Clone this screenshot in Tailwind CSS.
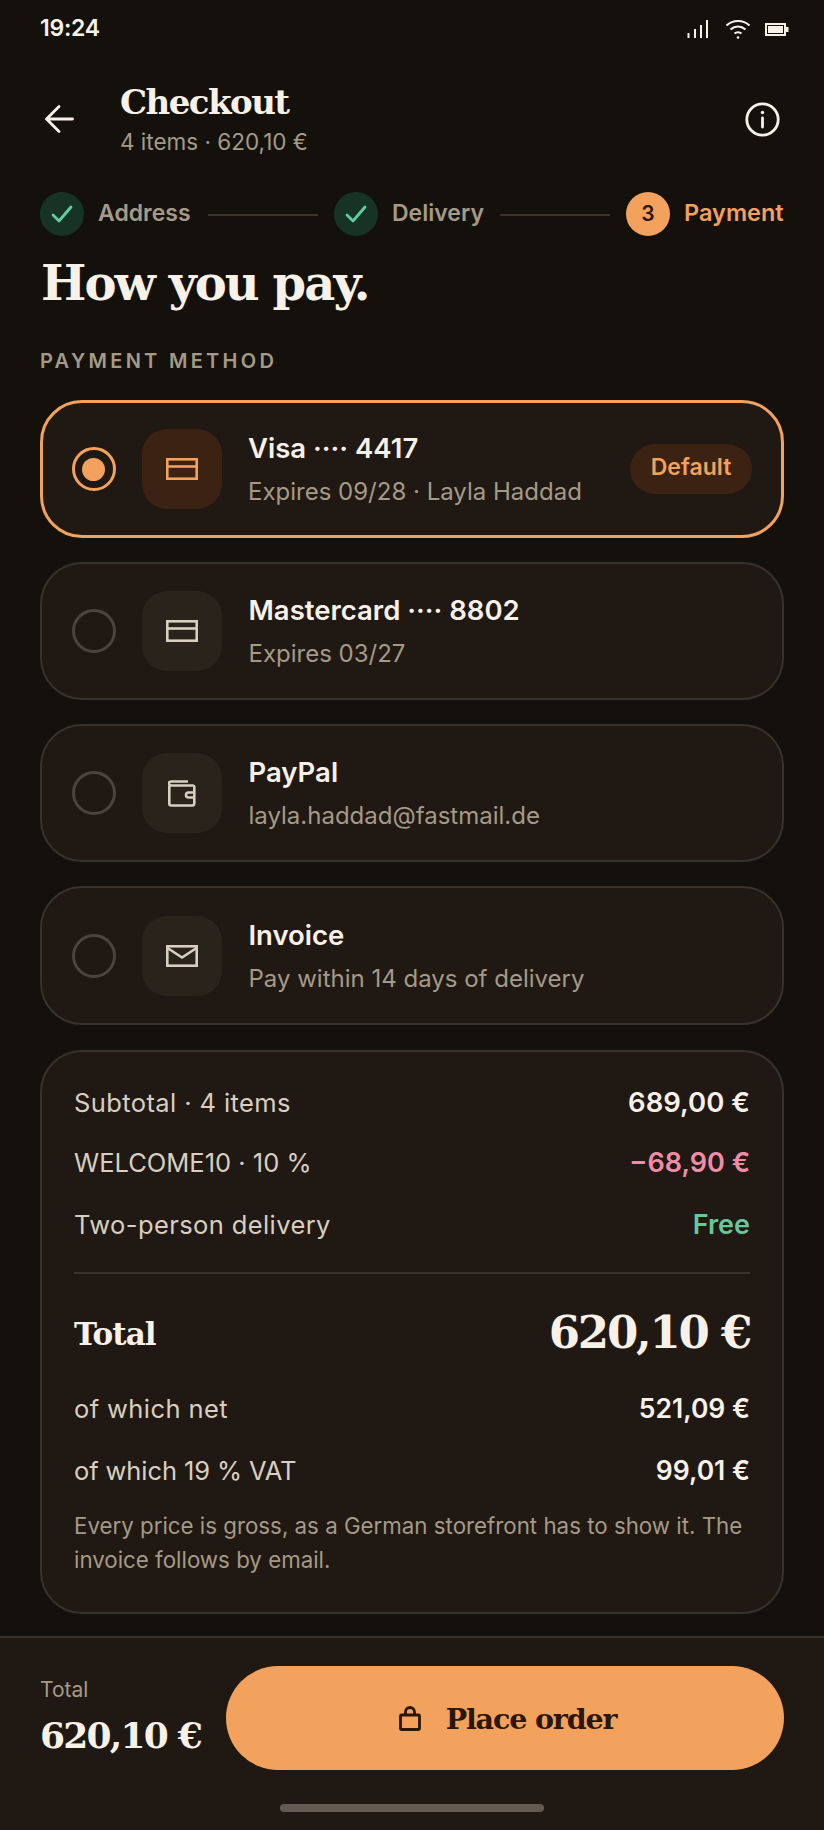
<!DOCTYPE html>
<html lang="en">
<head>
    <meta charset="UTF-8">
    <meta name="viewport" content="width=device-width, initial-scale=1.0">
    <title>Checkout</title>
    <script src="https://cdn.jsdelivr.net/npm/@tailwindcss/browser@4"></script>
</head>
<body class="bg-[#14110d] font-['Inter','Noto_Sans',sans-serif] text-[#f7f1e8]">
<div class="w-[824px] h-[1830px] flex flex-col overflow-hidden">

    <!-- Status bar -->
    <div class="h-[56px] pl-[40px] pr-[35px] flex items-center justify-between shrink-0">
        <span class="text-[23px] font-semibold tracking-[-0.01em]">19:24</span>
        <div class="flex items-center mt-[2px] text-[#f7f1e8]">
            <svg class="mr-[17px]" width="21" height="20" viewBox="0 0 21 20" fill="none" stroke="currentColor" stroke-width="2"><path d="M1.5 14v5M8 10v9M14 6v13M20 1v18"/></svg>
            <svg class="mr-[14px]" width="26" height="20" viewBox="0 0 26 20" fill="none" stroke="currentColor" stroke-width="2.2"><path d="M1.5 6.5C8 .5 18 .5 24.5 6.500M5.500 10.500C10 6.500 16 6.500 20.500 10.500M9.500 14.500c2-1.700 5-1.700 7 0"/><circle cx="13" cy="18.500" r="1.300" fill="currentColor" stroke="none"/></svg>
            <svg width="24" height="13" viewBox="0 0 24 13" fill="none"><rect x="1" y="1" width="19" height="11" stroke="currentColor" stroke-width="2"/><rect x="3" y="3" width="15" height="7" fill="currentColor"/><rect x="21" y="4" width="2.500" height="5" fill="currentColor"/></svg>
        </div>
    </div>

    <!-- Header -->
    <div class="h-[126px] pl-[45px] pr-[44px] flex items-center justify-between shrink-0">
        <div class="flex items-center">
            <svg width="29" height="28" viewBox="0 0 29 28" fill="none" stroke="currentColor" stroke-width="2.800" stroke-linecap="round" stroke-linejoin="round"><path d="M27.500 14H2M14 1.500 1.500 14 14 26.500"/></svg>
            <div class="ml-[46px] mt-[-3px]">
                <div class="font-['DejaVu_Serif',serif] font-bold text-[34px] leading-[44px] tracking-[-0.045em]">Checkout</div>
                <div class="text-[22.500px] leading-[26px] mt-[5px] text-[#a59a86]">4 items · 620,10 €</div>
            </div>
        </div>
        <svg width="35" height="35" viewBox="0 0 35 35" fill="none" stroke="currentColor" stroke-width="2.800" stroke-linecap="round"><circle cx="17.500" cy="17.500" r="15.700"/><path d="M17.500 16v9"/><circle cx="17.500" cy="10.500" r="1.700" fill="currentColor" stroke="none"/></svg>
    </div>

    <!-- Stepper -->
    <div class="h-[44px] mt-[10px] mx-[40px] flex items-center shrink-0 text-[23px] font-semibold">
        <span class="w-[44px] h-[44px] rounded-full bg-[#173325] flex items-center justify-center shrink-0">
            <svg width="22" height="18" viewBox="0 0 22 18" fill="none" stroke="#5fcf9f" stroke-width="2.800" stroke-linecap="round" stroke-linejoin="round"><path d="M2 10l6 6L20 2"/></svg>
        </span>
        <span class="ml-[14px] mb-[2px] text-[#a59a86] w-[96px]">Address</span>
        <span class="h-[2px] w-[110px] ml-[14px] bg-[#3b352d] mt-[2px]"></span>
        <span class="ml-[16px] w-[44px] h-[44px] rounded-full bg-[#173325] flex items-center justify-center shrink-0">
            <svg width="22" height="18" viewBox="0 0 22 18" fill="none" stroke="#5fcf9f" stroke-width="2.800" stroke-linecap="round" stroke-linejoin="round"><path d="M2 10l6 6L20 2"/></svg>
        </span>
        <span class="ml-[14px] mb-[2px] text-[#a59a86] w-[94px]">Delivery</span>
        <span class="h-[2px] w-[110px] ml-[14px] bg-[#3b352d] mt-[2px]"></span>
        <span class="ml-[16px] w-[44px] h-[44px] rounded-full bg-[#f2a25c] text-[#2b160a] text-[21px] flex items-center justify-center shrink-0">3</span>
        <span class="ml-[14px] mb-[2px] text-[23.500px] text-[#f2a25c]">Payment</span>
    </div>

    <h1 class="mx-[41px] mt-[15px] font-['DejaVu_Serif',serif] font-bold text-[48px] leading-[64px] tracking-[-0.04em] shrink-0">How you pay.</h1>

    <div class="mx-[40px] mt-[34px] text-[20px] leading-[24px] font-semibold tracking-[0.165em] text-[#a59a86] shrink-0">PAYMENT METHOD</div>

    <!-- Payment methods -->
    <div class="mx-[40px] mt-[27px] flex flex-col gap-[24px] shrink-0">
        <div class="h-[138px] rounded-[42px] border-[3.500px] border-[#f2a25c] bg-[#1f1813] pl-[28.500px] pr-[29px] flex items-center">
            <span class="w-[44px] h-[44px] rounded-full border-[3.500px] border-[#f2a25c] flex items-center justify-center shrink-0">
                <span class="w-[23px] h-[23px] rounded-full bg-[#f2a25c]"></span>
            </span>
            <span class="ml-[26px] w-[80px] h-[80px] rounded-[25px] bg-[#3b2213] flex items-center justify-center shrink-0 text-[#f2a25c]">
                <svg width="32" height="22" viewBox="0 0 32 22" fill="none" stroke="currentColor" stroke-width="2.600"><rect x="1.300" y="1.300" width="29.400" height="19.400"/><path d="M1 8.500h30"/></svg>
            </span>
            <div class="ml-[26.500px] flex-1">
                <div class="text-[27.500px] leading-[34px] font-semibold">Visa ···· 4417</div>
                <div class="text-[24px] leading-[30px] mt-[12px] text-[#a59a86]">Expires 09/28 · Layla Haddad</div>
            </div>
            <span class="h-[50px] w-[122px] pb-[3px] rounded-full bg-[#3b2213] text-[#f2a25c] text-[23px] font-semibold flex items-center justify-center">Default</span>
        </div>

        <div class="h-[138px] rounded-[42px] border-2 border-[#38322b] bg-[#1f1813] pl-[30px] pr-[30px] flex items-center">
            <span class="w-[44px] h-[44px] rounded-full border-[3.500px] border-[#4a443e] shrink-0"></span>
            <span class="ml-[26px] w-[80px] h-[80px] rounded-[25px] bg-[#2a231b] flex items-center justify-center shrink-0 text-[#d8cfc0]">
                <svg width="32" height="22" viewBox="0 0 32 22" fill="none" stroke="currentColor" stroke-width="2.600"><rect x="1.300" y="1.300" width="29.400" height="19.400"/><path d="M1 8.500h30"/></svg>
            </span>
            <div class="ml-[26.500px] flex-1">
                <div class="text-[27.500px] leading-[34px] font-semibold">Mastercard ···· 8802</div>
                <div class="text-[24px] leading-[30px] mt-[12px] text-[#a59a86]">Expires 03/27</div>
            </div>
        </div>

        <div class="h-[138px] rounded-[42px] border-2 border-[#38322b] bg-[#1f1813] pl-[30px] pr-[30px] flex items-center">
            <span class="w-[44px] h-[44px] rounded-full border-[3.500px] border-[#4a443e] shrink-0"></span>
            <span class="ml-[26px] w-[80px] h-[80px] rounded-[25px] bg-[#2a231b] flex items-center justify-center shrink-0 text-[#d8cfc0]">
                <svg width="28" height="27" viewBox="0 0 28 27" fill="none" stroke="currentColor" stroke-width="2.600" stroke-linejoin="round"><path d="M1.300 6v17.500a2 2 0 0 0 2 2h21.400a2 2 0 0 0 1.600-2V7a1.500 1.500 0 0 0-1.600-1.500H3a1.800 1.800 0 0 1 0-4h17"/><path d="M26.500 12.500h-6a2.500 2.500 0 0 0 0 5h6"/></svg>
            </span>
            <div class="ml-[26.500px] flex-1">
                <div class="text-[27.500px] leading-[34px] font-semibold">PayPal</div>
                <div class="text-[24px] leading-[30px] mt-[12px] text-[#a59a86]">layla.haddad@fastmail.de</div>
            </div>
        </div>

        <div class="h-[139px] rounded-[42px] border-2 border-[#38322b] bg-[#1f1813] pl-[30px] pr-[30px] flex items-center">
            <span class="w-[44px] h-[44px] rounded-full border-[3.500px] border-[#4a443e] shrink-0"></span>
            <span class="ml-[26px] w-[80px] h-[80px] rounded-[25px] bg-[#2a231b] flex items-center justify-center shrink-0 text-[#d8cfc0]">
                <svg width="32" height="22" viewBox="0 0 32 22" fill="none" stroke="currentColor" stroke-width="2.600"><rect x="1.300" y="1.300" width="29.400" height="19.400"/><path d="M1.500 3 16 12.500 30.500 3"/></svg>
            </span>
            <div class="ml-[26.500px] flex-1">
                <div class="text-[27.500px] leading-[34px] font-semibold">Invoice</div>
                <div class="text-[24px] leading-[30px] mt-[12px] text-[#a59a86]">Pay within 14 days of delivery</div>
            </div>
        </div>
    </div>

    <!-- Order summary -->
    <div class="mx-[40px] mt-[25px] h-[564px] rounded-[42px] border-2 border-[#38322b] bg-[#1f1813] px-[32px] shrink-0 text-[#d8cfc0] text-[25.500px] tracking-[0.4px]">
        <div class="h-[30px] mt-[36px] flex items-center justify-between"><span>Subtotal · 4 items</span><span class="font-semibold text-[27.500px] tracking-normal text-[#f7f1e8]">689,00 €</span></div>
        <div class="h-[30px] mt-[30px] flex items-center justify-between"><span class="tracking-normal">WELCOME10 · 10 %</span><span class="font-semibold text-[27px] tracking-normal text-[#f08da6]">−68,90 €</span></div>
        <div class="h-[30px] mt-[32px] flex items-center justify-between"><span>Two-person delivery</span><span class="font-semibold text-[27px] tracking-normal text-[#68c79b]">Free</span></div>
        <div class="h-[2px] mt-[32px] bg-[#38322b]"></div>
        <div class="h-[60px] mt-[30px] flex items-center justify-between font-['DejaVu_Serif',serif] font-bold tracking-normal text-[#f7f1e8]">
            <span class="text-[31px] tracking-[-0.03em]">Total</span><span class="text-[45px] mb-[3px] tracking-[-0.05em]">620,10 €</span>
        </div>
        <div class="h-[30px] mt-[30px] flex items-center justify-between"><span>of which net</span><span class="font-semibold text-[26.500px] tracking-normal text-[#f7f1e8]">521,09 €</span></div>
        <div class="h-[30px] mt-[32px] flex items-center justify-between"><span class="tracking-[-0.1px]">of which 19 % VAT</span><span class="font-semibold text-[26.500px] tracking-normal text-[#f7f1e8]">99,01 €</span></div>
        <p class="mt-[23px] text-[22.300px] leading-[34px] text-[#a59a86] tracking-normal">Every price is gross, as a German storefront has to show it. The invoice follows by email.</p>
    </div>

    <!-- Footer -->
    <div class="mt-[22px] flex-1 border-t-2 border-[#38322b] bg-[#1f1813] relative">
        <div class="flex items-center pl-[40px] pr-[40px] pt-[28px]">
            <div class="w-[186px] shrink-0">
                <div class="text-[21px] leading-[26px] text-[#a59a86]">Total</div>
                <div class="font-['DejaVu_Serif',serif] font-bold text-[36px] leading-[50px] mt-[7px] tracking-[-0.05em]">620,10 €</div>
            </div>
            <div class="flex-1 h-[104px] pl-[5px] rounded-full bg-[#f2a25c] text-[#2b160a] flex items-center justify-center gap-[25px]">
                <svg width="22" height="25" viewBox="0 0 22 25" fill="none" stroke="currentColor" stroke-width="2.800"><rect x="1.500" y="9" width="19" height="14.500" rx="1"/><path d="M6.500 9V6a4.500 4.500 0 0 1 9 0v3"/></svg>
                <span class="font-['DejaVu_Serif',serif] font-bold text-[28.500px] mt-[3px] tracking-[-0.04em]">Place order</span>
            </div>
        </div>
        <div class="absolute left-[280px] top-[166px] w-[264px] h-[8px] rounded-full bg-[#625a53]"></div>
    </div>
</div>
</body>
</html>
